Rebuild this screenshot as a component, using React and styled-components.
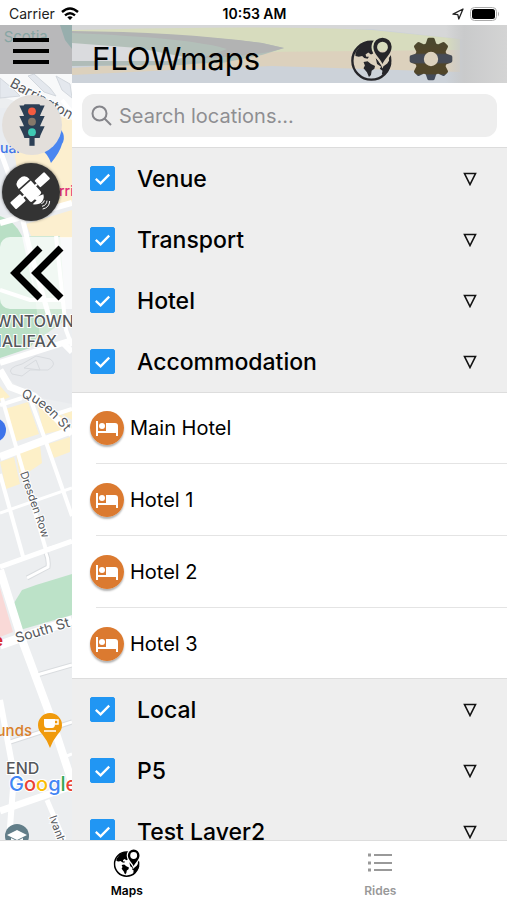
import React, { useState } from "react";
import styled, { createGlobalStyle } from "styled-components";

const layers = [
  { id: "venue", name: "Venue", items: [] },
  { id: "transport", name: "Transport", items: [] },
  { id: "hotel", name: "Hotel", items: [] },
  {
    id: "accommodation",
    name: "Accommodation",
    items: ["Main Hotel", "Hotel 1", "Hotel 2", "Hotel 3"]
  },
  { id: "local", name: "Local", items: [] },
  { id: "p5", name: "P5", items: [] },
  { id: "test2", name: "Test Layer2", items: [] }
];

function GlobeIcon({ id, color, size }) {
  return (
    <svg width={size} height={size} viewBox="0 0 126 130" aria-hidden="true">
      <mask id={id}>
        <rect width="126" height="130" fill="#fff" />
        <path
          d="M94 82C86 64 66 50 66 30a28 28 0 0 1 56 0C122 50 102 64 94 82Z"
          fill="#000"
          stroke="#000"
          strokeWidth="9"
        />
      </mask>
      <g mask={`url(#${id})`}>
        <circle cx="61" cy="70" r="56" fill="none" stroke={color} strokeWidth="7" />
        <path
          fill={color}
          d="M14 46L30 24 46 16 66 14 72 34 64 38 68 48 60 52 52 46 44 52 46 58 54 58 50 64 40 62 34 56 24 58 14 56Z"
        />
        <path fill={color} d="M38 74L50 72 60 80 72 86 70 94 62 100 60 112 54 118 48 104 38 92 42 84Z" />
        <path fill={color} d="M74 62L82 70 88 80 98 86 108 78 116 66 120 80 112 98 98 112 92 110 94 100 86 94 90 88 78 80Z" />
      </g>
      <path
        fill={color}
        fillRule="evenodd"
        d="M94 80C88 64 67 50 67 29a27 27 0 0 1 54 0C121 50 100 64 94 80ZM94 14a16 16 0 1 0 0 32a16 16 0 1 0 0-32Z"
      />
    </svg>
  );
}

function GearIcon() {
  return (
    <svg width="44" height="44" viewBox="-66 -66 132 132" aria-hidden="true">
      <linearGradient id="gear" gradientUnits="userSpaceOnUse" x1="0" y1="-64" x2="0" y2="64">
        <stop offset="0.1" stopColor="#4b482e" />
        <stop offset="0.36" stopColor="#51462a" />
        <stop offset="0.4" stopColor="#464b56" />
        <stop offset="0.58" stopColor="#464b56" />
        <stop offset="0.62" stopColor="#51462a" />
        <stop offset="0.84" stopColor="#51462a" />
        <stop offset="0.88" stopColor="#444c5a" />
      </linearGradient>
      <mask id="gearShape">
        <circle r="35" fill="none" stroke="#fff" strokeWidth="27" />
        {[0, 45, 90, 135, 180, 225, 270, 315].map(a => (
          <path
            key={a}
            d="M-17 -42L-11 -60Q-10 -64 -6 -64H6Q10 -64 11 -60L17 -42Z"
            fill="#fff"
            transform={`rotate(${a})`}
          />
        ))}
      </mask>
      <rect x="-66" y="-66" width="132" height="132" fill="url(#gear)" mask="url(#gearShape)" />
    </svg>
  );
}

function BedIcon() {
  return (
    <svg width="34" height="34" viewBox="0 0 34 34" aria-hidden="true">
      <circle cx="17" cy="17" r="17" fill="#db7a30" />
      <g fill="#fff">
        <path d="M6 10h2v10h18v-3h2v8h-2v-3H8v3H6Z" />
        <circle cx="12" cy="15" r="3" />
        <path d="M16 12h9q3 0 3 3v5H16Z" />
      </g>
    </svg>
  );
}

function TrafficIcon() {
  return (
    <svg width="26" height="42" viewBox="0 0 80 128" aria-hidden="true">
      <g fill="#2c3f55">
        <path d="M1 4h78L65 34H15ZM1 36h78L65 66H15ZM1 68h78L63 102H17Z" />
        <rect x="15" y="0" width="50" height="104" rx="4" />
        <rect x="32" y="100" width="16" height="28" />
      </g>
      <circle cx="40" cy="22" r="12" fill="#f15b40" />
      <circle cx="40" cy="54" r="12" fill="#85786a" />
      <circle cx="40" cy="86" r="12" fill="#3fc9b3" />
    </svg>
  );
}

function SatelliteIcon() {
  return (
    <svg width="58" height="58" viewBox="0 0 174 174" aria-hidden="true">
      <g transform="translate(84 84) rotate(-42)" fill="#fff">
        <rect x="-68" y="-14" width="40" height="27" rx="3" />
        <rect x="30" y="-14" width="40" height="27" rx="3" />
        <path d="M-30 -4h60v6h-60Z" />
        <path d="M-21 -22h44v44q0 6-6 6h-32q-6 0-6-6Z" />
        <path d="M-21 -27q0-22 22-22t22 22Z" />
        <path d="M-4 28h10v12h-10Z" />
      </g>
      <path d="M92 106l32-12q4 12-4 22t-28 8l12-12Z" fill="#fff" />
      <path d="M118 122q8-2 9-10M120 130q14-3 15-17M122 138q20-4 21-24" fill="none" stroke="#fff" strokeWidth="3" />
    </svg>
  );
}

function MapArt() {
  return (
    <MapSvg viewBox="0 25 72 815" preserveAspectRatio="xMinYMin slice" aria-label="Map of Halifax">
      <rect y="25" width="72" height="815" fill="#eceef0" />

      {/* harbour under the menu bar */}
      <path d="M0 25H72V74H0Z" fill="#dcdde2" />
      <path d="M60 25H72V49L65 40Z" fill="#7fc0bd" />
      <text x="-9" y="42" fontSize="15" fill="#4fa5a1">a Scotia</text>

      {/* waterfront */}
      <path d="M0 74H72V130L40 110 0 96Z" fill="#f8f9fa" />
      <path d="M0 78L12 88 20 96 0 98ZM34 74L50 88 56 96 44 92 28 76ZM56 76L70 84 72 98 62 90Z" fill="#e4e8ee" stroke="#d3d8de" />
      <path d="M0 108H14L8 140 22 162 30 215 0 215Z" fill="#e9ecf0" />
      <path d="M62 116L72 120V202L54 208 24 216 14 150 34 140Z" fill="#fcefcf" />
      <path d="M26 224L72 210V238H32Z" fill="#fcefcf" />
      <path d="M0 216Q14 220 22 236L42 330 30 348 0 358Z" fill="#b9dfc5" />
      <path d="M28 236H60L66 320 40 338Z" fill="#cfe8d5" />
      <g stroke="#fff" fill="none">
        <path d="M0 150L18 200 30 250 50 320" strokeWidth="5" />
        <path d="M0 223L72 203" strokeWidth="6" />
        <path d="M62 100L72 112" strokeWidth="4" />
        <path d="M56 236L66 330 72 346M0 290L30 300 62 300" strokeWidth="4" />
      </g>

      {/* citadel and downtown blocks */}
      <path d="M0 362L64 342 72 350V404L30 396 0 372Z" fill="#e8eaed" />
      <path d="M12 374Q6 368 22 364L36 356 50 359Q58 364 48 370L30 370 22 376ZM24 368L36 360 40 370Z" fill="none" stroke="#d8dbdf" strokeWidth="1" />
      <path d="M0 386L10 397 0 401ZM5 409L28 402 39 434 14 442ZM36 400L66 418 72 428 44 434ZM62 414L72 411V420ZM16 454L40 445 42 463 20 478ZM0 462L14 457 20 484 6 489ZM48 444L70 437 70 452 54 458Z" fill="#fdf0c8" />
      <g stroke="#fff" fill="none">
        <path d="M0 363L72 340M62 342L72 352" strokeWidth="6" />
        <path d="M0 370L10 387 34 396 72 434" strokeWidth="7" />
        <path d="M0 405L22 398M50 416L72 409" strokeWidth="4" />
        <path d="M2 398L17 450 46 550" strokeWidth="4" />
        <path d="M30 398L46 442 72 516" strokeWidth="4" />
        <path d="M0 457L72 430" strokeWidth="8" />
        <path d="M0 474L24 560" strokeWidth="4" />
        <path d="M0 513L72 488M46 549L72 542" strokeWidth="3" />
      </g>

      {/* south end */}
      <path d="M14 603L22 590 36 585 72 574V615L20 630Z" fill="#bce2c8" />
      <path d="M0 588L13 632 0 637Z" fill="#f9d9d7" />
      <g stroke="#d9dcdf" fill="none" strokeWidth="5">
        <path d="M46 553Q49 560 48 567L27 578M37 675L72 665M7 743L72 722" />
      </g>
      <g stroke="#fff" fill="none">
        <path d="M0 567L72 541" strokeWidth="5" />
        <path d="M46 553Q49 560 48 567L27 578M37 675L72 665M7 743L72 722" strokeWidth="3" />
        <path d="M0 570L22 640 50 715 72 782" strokeWidth="8" />
        <path d="M0 645L72 620" strokeWidth="9" />
        <path d="M0 700L14 775 9 840" strokeWidth="6" />
        <path d="M62 758L72 754" strokeWidth="3" />
        <path d="M0 811L72 786" strokeWidth="7" />
        <path d="M47 800L64 840" strokeWidth="5" />
      </g>

      {/* pins */}
      <path d="M40 136a12 12 0 1 1 22 8Q60 152 51 163Q48 154 40 148Z" fill="#4a86f0" />
      <circle cx="-6" cy="430" r="12" fill="#3d74ea" />
      <path d="M50 748Q47 740 42 734A12 12 0 1 1 58 734Q53 740 50 748Z" fill="#f09a0c" />
      <path d="M44 719H55V724Q55 728 52 728H47Q44 728 44 724Z" fill="#fff" />
      <path d="M55 720h3v4h-3M44 731h12" fill="none" stroke="#fff" strokeWidth="1.500" />
      <circle cx="17" cy="836" r="12" fill="#627e89" />
      <path d="M17 830L27 835 17 840 7 835ZM11 838V841L17 844 23 841V838L17 841Z" fill="#fff" />

      {/* labels */}
      <path id="queen" d="M21 398Q40 400 70 438" fill="none" />
      <g fill="#55585c" stroke="#fff" strokeWidth="2" paintOrder="stroke">
        <text transform="translate(9 86) rotate(29)" fontSize="14">Barrington</text>
        <text fontSize="13">
          <textPath href="#queen">Queen St</textPath>
        </text>
        <text transform="translate(20 473) rotate(71)" fontSize="11">Dresden Row</text>
        <text transform="translate(17 643) rotate(-17)" fontSize="14">South St</text>
        <text transform="translate(49 817) rotate(70)" fontSize="11">Ivanhoe St</text>
        <text x="74" y="327" fontSize="16" fontWeight="500" textAnchor="end">DOWNTOWN</text>
        <text x="57" y="347" fontSize="16" fontWeight="500" textAnchor="end">HALIFAX</text>
        <text x="6" y="774" fontSize="16" fontWeight="500">END</text>
      </g>
      <text x="0" y="153" fontSize="14" fontWeight="500" fill="#3d74ea">uar</text>
      <text x="59" y="196" fontSize="14" fontWeight="500" fill="#e0307a">rrin</text>
      <text x="32" y="736" fontSize="15" fontWeight="500" fill="#d9802c" textAnchor="end">unds</text>
      <text x="3" y="646" fontSize="15" fontWeight="700" fill="#d8292f" textAnchor="end">e</text>
      <text x="9" y="791" fontSize="20" fontWeight="500" stroke="#fff" strokeWidth="2" paintOrder="stroke">
        <tspan fill="#4285f4">G</tspan>
        <tspan fill="#ea4335">o</tspan>
        <tspan fill="#fbbc05">o</tspan>
        <tspan fill="#4285f4">g</tspan>
        <tspan fill="#34a853">l</tspan>
        <tspan fill="#ea4335">e</tspan>
      </text>
    </MapSvg>
  );
}

function HeaderArt() {
  return (
    <HeaderSvg viewBox="0 0 435 58" preserveAspectRatio="none" aria-hidden="true">
      <linearGradient id="fade" x1="0" x2="1" y1="0" y2="0">
        <stop offset="0" stopColor="#c6c7c8" stopOpacity="0" />
        <stop offset="0.3" stopColor="#c9cacb" />
        <stop offset="1" stopColor="#d4d4d4" />
      </linearGradient>
      <rect width="435" height="58" fill="#ccd2d9" />
      <path d="M0 0H435V20L388 14 300 4 0 5Z" fill="#d6d7d8" />
      <path d="M0 5Q200 0 300 5L388 14V28L200 32 0 10Z" fill="#d7dcbe" />
      <path d="M0 43L110 36 190 27 388 25V47L200 41 100 45 0 50Z" fill="#dcd1bd" />
      <path d="M0 7Q110 8 190 18L212 23 190 30 150 38 0 40Z" fill="#b3c0b9" />
      <path d="M0 6Q110 7 190 18L212 23Q190 31 130 33L155 24Q120 13 0 8Z" fill="#b2b3b3" />
      <path d="M0 18L66 23 112 32 100 36H0Z" fill="#dadbde" />
      <path d="M0 36H150L110 40 0 41Z" fill="#b0bcb8" />
      <rect x="374" width="61" height="58" fill="url(#fade)" />
    </HeaderSvg>
  );
}

function LayerSection({ layer, checked, open, onCheck, onToggle }) {
  return (
    <section>
      <LayerRow>
        <Checkbox
          type="checkbox"
          id={layer.id}
          checked={checked}
          onChange={() => onCheck(layer.id)}
        />
        <LayerName htmlFor={layer.id}>{layer.name}</LayerName>
        <ToggleButton aria-label={`Expand ${layer.name}`} onClick={() => onToggle(layer.id)}>
          <svg width="14" height="14" viewBox="0 0 14 14" aria-hidden="true">
            <path d="M1.5 1.5H12.5L7 12.5Z" fill="none" stroke="#111" strokeWidth="1.6" />
          </svg>
        </ToggleButton>
      </LayerRow>
      {open &&
        layer.items.length > 0 &&
        <ItemList>
          {layer.items.map(item =>
            <Item key={item}>
              <ItemIcon>
                <BedIcon />
              </ItemIcon>
              {item}
            </Item>
          )}
        </ItemList>}
    </section>
  );
}

function App() {
  const [search, setSearch] = useState("");
  const [activeTab, setActiveTab] = useState("maps");
  const [opened, setOpened] = useState(["accommodation"]);
  const [hidden, setHidden] = useState([]);

  const flip = (list, id) => (list.includes(id) ? list.filter(x => x !== id) : [...list, id]);

  return (
    <Page>
      <GlobalStyle />
      <StatusBar>
        <Carrier>
          Carrier
          <svg width="18" height="13" viewBox="0 0 18 13" aria-hidden="true">
            <g fill="none" stroke="#000" strokeWidth="2.4">
              <path d="M1 5Q9 -2 17 5" />
              <path d="M4 8.400Q9 4 14 8.400" />
            </g>
            <path d="M6.300 10.300Q9 8 11.700 10.300L9 13Z" />
          </svg>
        </Carrier>
        <Clock>10:53 AM</Clock>
        <StatusIcons>
          <svg width="12" height="12" viewBox="0 0 12 12" aria-hidden="true">
            <path d="M1 6.200L11 1 6.800 11 5.800 6.600Z" fill="none" stroke="#222" strokeWidth="1.300" strokeLinejoin="round" />
          </svg>
          <svg width="30" height="14" viewBox="0 0 30 14" aria-hidden="true">
            <rect x="0.5" y="0.500" width="26" height="13" rx="4" fill="#fff" stroke="#aaa" />
            <rect x="2" y="2" width="23" height="10" rx="2.500" fill="#000" />
            <path d="M28 4.500Q30 7 28 9.500Z" fill="#aaa" />
          </svg>
        </StatusIcons>
      </StatusBar>

      <Main>
        <MapPane>
          <MapArt />
          <MapControls>
            <MenuButton aria-label="Menu">
              <svg width="36" height="26" viewBox="0 0 36 26" aria-hidden="true">
                <path d="M0 2H36M0 13H36M0 24H36" stroke="#000" strokeWidth="4" />
              </svg>
            </MenuButton>
            <RoundButton $size={60} $color="#e3dfdb" aria-label="Traffic">
              <TrafficIcon />
            </RoundButton>
            <RoundButton $size={58} $color="#333" $raised aria-label="Satellite">
              <SatelliteIcon />
            </RoundButton>
            <CollapseButton aria-label="Close panel">
              <svg width="54" height="56" viewBox="0 0 54 56" aria-hidden="true">
                <path d="M30 3L5 28 30 53M51 3L26 28 51 53" fill="none" stroke="#000" strokeWidth="7" />
              </svg>
            </CollapseButton>
          </MapControls>
        </MapPane>

        <Panel>
          <Header>
            <HeaderArt />
            <Title>FLOWmaps</Title>
            <HeaderButton aria-label="Map view">
              <GlobeIcon id="globeHead" color="#26262a" size={44} />
            </HeaderButton>
            <HeaderButton aria-label="Settings">
              <GearIcon />
            </HeaderButton>
          </Header>
          <SearchArea>
            <SearchBox>
              <svg width="21" height="21" viewBox="0 0 21 21" aria-hidden="true">
                <g fill="none" stroke="#85858a" strokeWidth="2">
                  <circle cx="8.500" cy="8.500" r="7" />
                  <path d="M13.500 13.500L20 20" />
                </g>
              </svg>
              <SearchInput
                type="text"
                aria-label="Search locations"
                placeholder="Search locations..."
                value={search}
                onChange={e => setSearch(e.target.value)}
              />
            </SearchBox>
          </SearchArea>
          <LayerList>
            {layers.map(layer =>
              <LayerSection
                key={layer.id}
                layer={layer}
                checked={!hidden.includes(layer.id)}
                open={opened.includes(layer.id)}
                onCheck={id => setHidden(flip(hidden, id))}
                onToggle={id => setOpened(flip(opened, id))}
              />
            )}
          </LayerList>
        </Panel>
      </Main>

      <TabBar>
        <Tab $active={activeTab === "maps"} onClick={() => setActiveTab("maps")}>
          <GlobeIcon id="globeTab" color="currentColor" size={28} />
          Maps
        </Tab>
        <Tab $active={activeTab === "rides"} onClick={() => setActiveTab("rides")}>
          <svg width="26" height="28" viewBox="0 0 26 28" aria-hidden="true">
            <path d="M7 6H25M7 14H25M7 21H25" stroke="currentColor" strokeWidth="2" />
            <path d="M1 6H4M1 14H4M1 21H4" stroke="currentColor" strokeWidth="3" />
          </svg>
          Rides
        </Tab>
      </TabBar>
    </Page>
  );
}

const GlobalStyle = createGlobalStyle`
  * {
    box-sizing: border-box;
  }
  body {
    margin: 0;
    font-family: Inter, "Liberation Sans", sans-serif;
    color: #000;
    background: white;
  }
  button {
    padding: 0;
    border: none;
    background: none;
    color: inherit;
    font-family: inherit;
    cursor: pointer;
  }
  svg {
    display: block;
    flex-shrink: 0;
  }
`;

const Page = styled.div`
  display: flex;
  flex-direction: column;
  height: 100vh;
  overflow: hidden;
`;

const StatusBar = styled.div`
  display: grid;
  grid-template-columns: 1fr auto 1fr;
  align-items: center;
  height: 25px;
  padding: 2px 7px 0 9px;
  font-size: 14px;
`;

const Carrier = styled.div`
  display: flex;
  align-items: center;
  gap: 6px;
  color: #222;
`;

const Clock = styled.div`
  font-weight: 600;
`;

const StatusIcons = styled.div`
  display: flex;
  justify-content: flex-end;
  align-items: center;
  gap: 6px;
`;

const Main = styled.main`
  display: flex;
  flex: 1;
  min-height: 0;
`;

const MapPane = styled.div`
  position: relative;
  flex: 0 0 72px;
  overflow: hidden;
`;

const MapSvg = styled.svg`
  width: 100%;
  height: 100%;
`;

/* floats over the map */
const MapControls = styled.div`
  position: absolute;
  inset: 0;
  display: flex;
  flex-direction: column;
  align-items: flex-start;
`;

const MenuButton = styled.button`
  width: 100%;
  height: 49px;
  padding: 2px 0 0 13px;
  margin-bottom: 21px;
  background: rgba(165, 165, 165, 0.65);
`;

const RoundButton = styled.button`
  display: flex;
  align-items: center;
  justify-content: center;
  width: ${props => props.$size}px;
  height: ${props => props.$size}px;
  margin: 0 0 8px 2px;
  border-radius: 50%;
  background: ${props => props.$color};
  box-shadow: ${props => (props.$raised ? "0 0 3px rgba(0, 0, 0, 0.5)" : "none")};
`;

const CollapseButton = styled.button`
  width: 100%;
  height: 72px;
  margin-top: 8px;
  padding-left: 10px;
  border-radius: 10px 0 0 10px;
  background: rgba(255, 255, 255, 0.7);
`;

const Panel = styled.div`
  display: flex;
  flex-direction: column;
  flex: 1;
  min-width: 0;
  background: white;
`;

const Header = styled.header`
  position: relative;
  display: flex;
  align-items: center;
  flex-shrink: 0;
  gap: 15px;
  height: 58px;
  padding: 10px 54px 0 20px;
`;

const HeaderSvg = styled.svg`
  position: absolute;
  inset: 0;
  width: 100%;
  height: 100%;
`;

const Title = styled.h1`
  position: relative;
  flex: 1;
  margin: 0;
  font-size: 31px;
  line-height: 40px;
  font-weight: 400;
`;

const HeaderButton = styled.button`
  position: relative;
`;

const SearchArea = styled.div`
  flex-shrink: 0;
  padding: 11px 10px 10px;
  border-bottom: 1px solid #dcdcdc;
`;

const SearchBox = styled.div`
  display: flex;
  align-items: center;
  gap: 7px;
  height: 43px;
  padding: 0 9px;
  border-radius: 12px;
  background: #eee;
`;

const SearchInput = styled.input`
  flex: 1;
  min-width: 0;
  padding: 0;
  border: none;
  outline: none;
  background: transparent;
  font-family: inherit;
  font-size: 20px;

  &::placeholder {
    color: #8e8e92;
  }
`;

const LayerList = styled.div`
  flex: 1;
  min-height: 0;
  overflow: hidden;
`;

const LayerRow = styled.div`
  display: flex;
  align-items: center;
  height: 61px;
  padding: 0 30px 0 18px;
  background: #eee;
`;

const Checkbox = styled.input`
  appearance: none;
  width: 25px;
  height: 25px;
  margin: 0 22px 0 0;
  border: 1px solid #2196f3;
  border-radius: 2px;
  background: white;

  &:checked {
    background: #2196f3
      url("data:image/svg+xml,%3Csvg xmlns='http://www.w3.org/2000/svg' viewBox='0 0 24 24'%3E%3Cpath d='M5 12.500L10 17 19 8' fill='none' stroke='white' stroke-width='2.400'/%3E%3C/svg%3E")
      center / contain;
  }
`;

const LayerName = styled.label`
  flex: 1;
  font-size: 23px;
  font-weight: 500;
`;

const ToggleButton = styled.button`
  width: 14px;
  height: 14px;
`;

const ItemList = styled.ul`
  margin: 0;
  padding: 0 0 0 24px;
  list-style: none;
  background: white;
  box-shadow: inset 0 1px #ddd, inset 0 -1px #ddd;
`;

const Item = styled.li`
  display: flex;
  align-items: center;
  gap: 6px;
  height: 72px;
  border-bottom: 1px solid #e4e4e4;
  font-size: 20px;

  &:last-child {
    height: 71px;
    border-bottom: none;
  }
`;

const ItemIcon = styled.span`
  margin-left: -6px;
  border-radius: 50%;
  box-shadow: 0 2px 2px rgba(0, 0, 0, 0.3);
`;

const TabBar = styled.nav`
  display: flex;
  flex-shrink: 0;
  height: 60px;
  border-top: 1px solid #ddd;
  background: white;
`;

const Tab = styled.button`
  display: flex;
  flex: 1;
  flex-direction: column;
  align-items: center;
  justify-content: flex-end;
  gap: 6px;
  padding-bottom: 2px;
  font-size: 12px;
  font-weight: 600;

  && {
    color: ${props => (props.$active ? "#000" : "#999")};
  }
`;

export default App;
